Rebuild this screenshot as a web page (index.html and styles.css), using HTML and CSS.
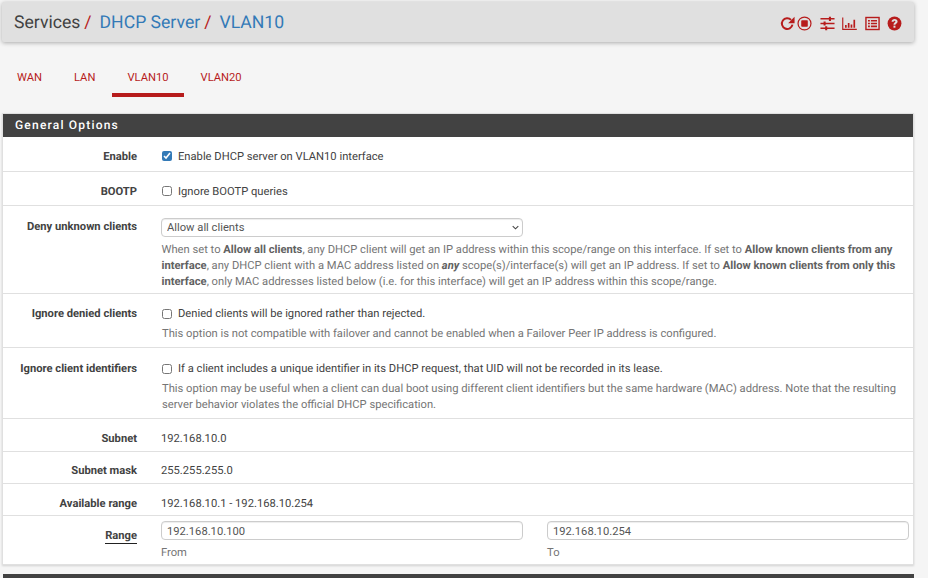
FILE: index.html
```html
<!DOCTYPE html>
<html lang="en">
<head>
<meta charset="utf-8">
<title>Services / DHCP Server / VLAN10</title>
<link rel="stylesheet" href="styles.css">
</head>
<body>
<header class="crumbbar">
  <h1 class="crumbs"><span>Services</span><i class="sep">/</i><a>DHCP Server</a><i class="sep">/</i><a>VLAN10</a></h1>
  <div class="icons">
    <svg class="ic ic-reload" viewBox="0 0 16 16"><path d="M13.300 9.200a5.700 5.700 0 1 1-1.500-5.100" fill="none" stroke="currentColor" stroke-width="2.100"/><path d="M15.500 .8v6.800H8.700z" fill="currentColor"/></svg>
    <svg class="ic ic-stop" viewBox="0 0 16 16"><circle cx="8" cy="8" r="6.900" fill="none" stroke="currentColor" stroke-width="1.300"/><rect x="4.500" y="4.500" width="7" height="7" rx=".8" fill="currentColor"/></svg>
    <svg class="ic ic-sliders" viewBox="0 0 16 16"><path d="M.5 3h15M.5 8h15M.5 13h15" stroke="currentColor" stroke-width="1.700"/><path d="M9.500 .8h2.200v4.400H9.500zM3.800 5.800H6v4.400H3.800zM5.500 10.800h2.200v4.400H5.500z" fill="currentColor"/></svg>
    <svg class="ic ic-chart" viewBox="0 0 16 16"><path d="M.8 1.500v12.700h15" fill="none" stroke="currentColor" stroke-width="1.200"/><path d="M3.200 9.500h1.800v3H3.200zM6.200 7.500H8v5H6.200zM9.200 9h1.800v3.500H9.200zM12.200 4h1.800v8.500h-1.800z" fill="currentColor"/></svg>
    <svg class="ic ic-list" viewBox="0 0 16 16"><rect x="1" y="1.600" width="14" height="12.800" fill="none" stroke="currentColor" stroke-width="1.500"/><path d="M3.200 4.200h2v1.700h-2zM3.200 7.200h2v1.700h-2zM3.200 10.200h2v1.700h-2zM6.300 4.200h6.500v1.700H6.300zM6.300 7.200h6.500v1.700H6.300zM6.300 10.200h6.500v1.700H6.300z" fill="currentColor"/></svg>
    <svg class="ic ic-help" viewBox="0 0 16 16"><circle cx="8" cy="8" r="7.400" fill="currentColor"/><path d="M4.900 6.100C5 4.300 6.300 3.200 8.200 3.200c1.800 0 3.100 1.100 3.100 2.600 0 2.200-2.300 2.100-2.300 3.600H6.900c0-2.500 2.100-2.400 2.100-3.500 0-.5-.4-.8-.9-.8-.6 0-1 .4-1.100 1.100z" fill="#e0e0e0"/><rect x="6.900" y="10.300" width="2.100" height="2.200" fill="#e0e0e0"/></svg>
  </div>
</header>

<nav class="tabs">
  <a class="tab">WAN</a>
  <a class="tab">LAN</a>
  <a class="tab active">VLAN10</a>
  <a class="tab">VLAN20</a>
</nav>

<section class="panel">
  <h2 class="panel-title">General Options</h2>
  <div class="row r-enable">
    <div class="lbl">Enable</div>
    <div class="val"><label class="chk"><input type="checkbox" checked>Enable DHCP server on VLAN10 interface</label></div>
  </div>
  <div class="row r-bootp">
    <div class="lbl">BOOTP</div>
    <div class="val"><label class="chk"><input type="checkbox">Ignore BOOTP queries</label></div>
  </div>
  <div class="row r-deny">
    <div class="lbl">Deny unknown clients</div>
    <div class="val">
      <div class="selwrap">
        <select class="sel"><option>Allow all clients</option></select>
        <svg class="chev" viewBox="0 0 8 5"><path d="M.8 .8 4 4 7.200 .8" fill="none" stroke="#444" stroke-width="1.200"/></svg>
      </div>
      <p class="help">When set to <b>Allow all clients</b>, any DHCP client will get an IP address within this scope/range on this interface. If set to <b>Allow known clients from any interface</b>, any DHCP client with a MAC address listed on <b><i>any</i></b> scope(s)/interface(s) will get an IP address. If set to <b>Allow known clients from only this interface</b>, only MAC addresses listed below (i.e. for this interface) will get an IP address within this scope/range.</p>
    </div>
  </div>
  <div class="row r-denied">
    <div class="lbl">Ignore denied clients</div>
    <div class="val">
      <label class="chk"><input type="checkbox">Denied clients will be ignored rather than rejected.</label>
      <p class="help">This option is not compatible with failover and cannot be enabled when a Failover Peer IP address is configured.</p>
    </div>
  </div>
  <div class="row r-ident">
    <div class="lbl">Ignore client identifiers</div>
    <div class="val">
      <label class="chk"><input type="checkbox">If a client includes a unique identifier in its DHCP request, that UID will not be recorded in its lease.</label>
      <p class="help">This option may be useful when a client can dual boot using different client identifiers but the same hardware (MAC) address. Note that the resulting server behavior violates the official DHCP specification.</p>
    </div>
  </div>
  <div class="row r-static r-subnet">
    <div class="lbl">Subnet</div>
    <div class="val">192.168.10.0</div>
  </div>
  <div class="row r-static">
    <div class="lbl">Subnet mask</div>
    <div class="val">255.255.255.0</div>
  </div>
  <div class="row r-static r-avail">
    <div class="lbl">Available range</div>
    <div class="val">192.168.10.1 - 192.168.10.254</div>
  </div>
  <div class="row r-range">
    <div class="lbl"><span class="req">Range</span></div>
    <div class="val two">
      <div class="field"><input class="txt" type="text" value="192.168.10.100"><span class="cap">From</span></div>
      <div class="field"><input class="txt" type="text" value="192.168.10.254"><span class="cap">To</span></div>
    </div>
  </div>
</section>
<div class="panel-next"></div>
</body>
</html>
```
FILE: styles.css
```css
html, body { margin: 0; padding: 0; height: 578px; overflow: hidden; }
body { background: #f5f5f5; font-family: Roboto, "Liberation Sans", sans-serif; font-size: 11.200px; color: #424242; text-rendering: geometricPrecision; }

.crumbbar { margin: 2px 14px 0 2px; height: 40px; box-sizing: border-box; padding: 0 12px; background: #e0e0e0; border-radius: 2px; box-shadow: 0 1px 4px rgba(0,0,0,.3); display: flex; align-items: center; justify-content: space-between; }
.crumbs { margin: 2px 0 0; font-size: 17.600px; font-weight: 400; color: #424242; display: flex; align-items: center; }
.crumbs a { color: #337ab7; }
.sep { font-style: normal; color: #b71c1c; margin: 0 8px 0 4px; }
.icons { display: flex; align-items: center; gap: 7.500px; color: #b71c1c; margin-top: 3px; }
.ic { width: 15px; height: 15px; display: block; }
.ic-reload { margin-right: -5.500px; }

.tabs { display: flex; margin: 18px 0 16px 1px; height: 37px; }
.tab { padding: 11px 16px 0; height: 22px; color: #b71c1c; font-size: 11.200px; line-height: 13px; }
.tab.active { padding: 11px 15.500px 0; margin: 0 .5px; border-bottom: 4px solid #b71c1c; }

.panel { margin: 0 14px 0 2px; background: #fff; border: 1px solid #e0e0e0; border-top: 0; box-shadow: 0 1px 2px rgba(0,0,0,.15); }
.panel-title { margin: 0; height: 24px; background: #424242; color: #fff; font-size: 12px; font-weight: 500; line-height: 23px; padding-left: 12px; letter-spacing: 1.200px; border-top: 1px solid #e0e0e0; box-sizing: border-box; }

.row { display: flex; border-bottom: 1px solid #e0e0e0; box-sizing: border-box; }
.row:last-child { border-bottom: 0; }
.lbl { width: 134px; flex: none; text-align: right; font-weight: 700; color: #424242; }
.val { margin-left: 24px; flex: 1; min-width: 0; padding-right: 4px; }
.req { border-bottom: 1px solid #212121; padding-bottom: 1px; }

.r-enable { height: 35px; align-items: center; padding-top: 4px; }
.r-bootp { height: 34px; align-items: center; padding-top: 5px; }
.r-deny { height: 88px; padding-top: 12px; }
.r-deny .lbl { padding-top: 2px; }
.r-deny .help { padding-left: .5px; }
.r-denied { height: 54px; padding-top: 13px; }
.r-ident { height: 71px; padding-top: 14px; }
.r-denied .help, .r-ident .help { padding-left: 1px; }
.r-static { height: 32px; align-items: center; padding-top: 5px; }
.r-subnet { height: 33px; padding-top: 6px; }
.r-avail { padding-top: 7px; }
.r-range { height: 48px; padding-top: 5px; }
.r-range .lbl { padding-top: 8px; }

.chk { display: flex; align-items: center; height: 13px; }
.chk input { width: 10px; height: 10px; margin: 0 6px 0 1px; accent-color: #337ab7; }

.selwrap { position: relative; width: 362px; height: 19px; margin-bottom: 5px; }
.sel { display: block; box-sizing: border-box; width: 100%; height: 19px; margin: 0; padding: 0 0 0 5px; font: 11.200px Roboto, sans-serif; color: #555; background: #fff; border: 1px solid #ccc; border-radius: 4px; appearance: none; box-shadow: inset 0 1px 1px rgba(0,0,0,.075); }
.chev { position: absolute; right: 4px; top: 7px; width: 7px; height: 5px; }
.help { margin: 0; color: #757575; font-size: 11.200px; line-height: 16px; }
.help b { color: #616161; }
.chk + .help { margin-top: 6px; }

.two { display: flex; gap: 24px; }
.field { flex: 1; display: flex; flex-direction: column; }
.txt { box-sizing: border-box; width: 100%; height: 19px; margin: 0; padding: 1px 5px 0; font: 11.200px Roboto, sans-serif; color: #555; background: #fff; border: 1px solid #ccc; border-radius: 4px; box-shadow: inset 0 1px 1px rgba(0,0,0,.075); }
.cap { color: #757575; font-size: 11.200px; margin-top: 6px; }

.panel-next { margin: 9px 14px 0 3px; height: 10px; background: #424242; }
```
